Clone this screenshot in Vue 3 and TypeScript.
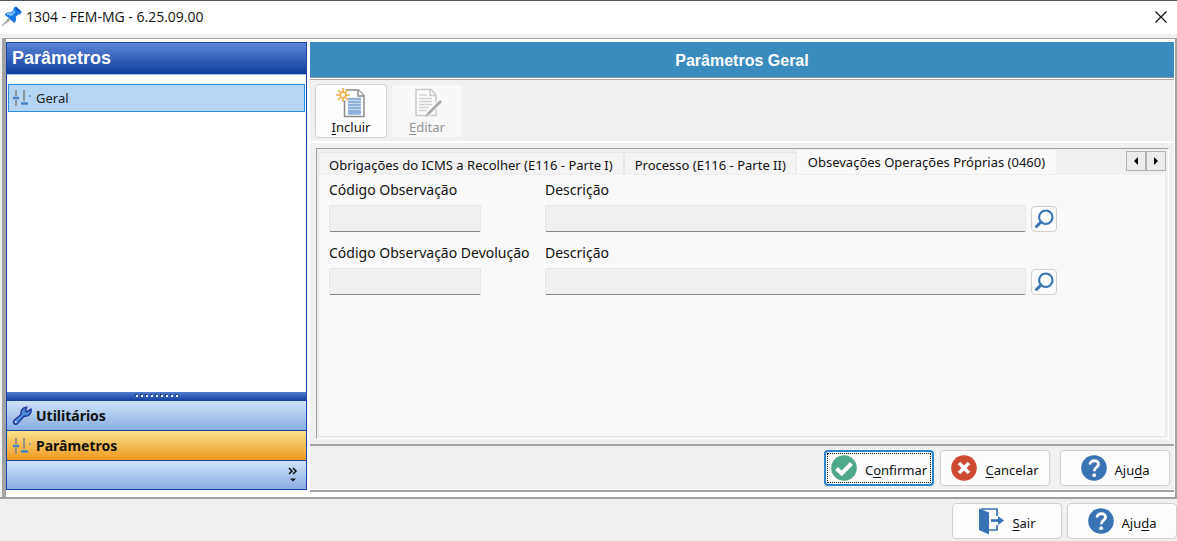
<script setup lang="ts">
import { ref } from 'vue'

interface Tab {
  id: string
  label: string
}

interface FieldRow {
  id: string
  codeLabel: string
  code: string
  description: string
}

const tabs: Tab[] = [
  { id: 'e116-1', label: 'Obrigações do ICMS a Recolher (E116 - Parte I)' },
  { id: 'e116-2', label: 'Processo (E116 - Parte II)' },
  { id: '0460', label: 'Obsevações Operações Próprias (0460)' },
]
const activeTab = ref('0460')

const rows = ref<FieldRow[]>([
  { id: 'obs', codeLabel: 'Código Observação', code: '', description: '' },
  { id: 'dev', codeLabel: 'Código Observação Devolução', code: '', description: '' },
])
</script>

<template>
  <div class="window">
    <header class="titlebar">
      <svg class="pin" viewBox="0 0 20 20" aria-hidden="true">
        <path d="M1 19 7 12l1.500 1.500z" fill="#a9adb3" stroke="#8f949b" stroke-width=".6" />
        <path d="M3.500 8C5 6 7.500 5.500 9.500 6.200L12 3.500C11.500 2 12.800 .6 14.500 .8L19.500 5.500C19.600 7.500 18 8.500 16.500 8L14 10.500C14.800 12.500 14.300 15 12.600 16.300z" fill="#1a78e6" />
        <path d="M14.500 .8 19.500 5.500C18 6.800 12.800 3.800 14.500 .8z" fill="#0b55bd" />
        <path d="M5.500 8c1.500-.8 3.200-.3 4.300.6l3.200-3.600" fill="none" stroke="#7cc4ff" stroke-width="1.800" />
      </svg>
      <h1>1304 - FEM-MG - 6.25.09.00</h1>
      <button class="close" type="button" aria-label="Fechar">
        <svg viewBox="0 0 12 12" width="12" height="12"><path d="M.5.5l11 11M11.500.5l-11 11" stroke="#111" stroke-width="1.200" /></svg>
      </button>
    </header>

    <div class="workspace">
      <aside class="sidebar">
        <h2>Parâmetros</h2>
        <nav class="list">
          <a href="#geral" class="entry">
            <svg class="sliders" viewBox="0 0 20 18" aria-hidden="true">
              <path d="M4 1v6M4 11v6M12 1v11" stroke="#8d959b" stroke-width="2" />
              <path d="M1 9h6M9 14.500h7" stroke="#4785c4" stroke-width="2.400" />
              <path d="M18 6v2" stroke="#4785c4" stroke-width="1.200" />
            </svg>
            Geral
          </a>
        </nav>
        <div class="grip"><i v-for="n in 9" :key="n"></i></div>
        <button class="group" type="button">
          <svg class="wrench" viewBox="0 0 20 20" aria-hidden="true">
            <path d="M2.200 14.300 9 8.500C8.600 5 10 1.500 14.800 1.200L13.500 4.300 14.500 6 19 3.300C19.800 8 16 10.800 12 10.300L5.500 17.500A2.300 2.300 0 1 1 2.200 14.300z" fill="#4b8fd8" stroke="#23399f" stroke-width="1.500" />
            <circle cx="3.800" cy="16.200" r=".9" fill="#dce9fb" />
          </svg>
          Utilitários
        </button>
        <button class="group selected" type="button">
          <svg class="sliders" viewBox="0 0 20 18" aria-hidden="true">
            <path d="M4 1v6M4 11v6M12 1v11" stroke="#99917c" stroke-width="2" />
            <path d="M1 9h6M9 14.500h7" stroke="#4785c4" stroke-width="2.400" />
            <path d="M18 6v2" stroke="#4785c4" stroke-width="1.200" />
          </svg>
          Parâmetros
        </button>
        <div class="overflow">
          <button type="button" aria-label="Configurar botões">
            <svg viewBox="0 0 10 16" width="10" height="16">
              <path d="M1 1l3 3-3 3M5 1l3 3-3 3" fill="none" stroke="#111" stroke-width="1.500" />
              <path d="M2 11.500h6L5 14.500z" fill="#111" />
            </svg>
          </button>
        </div>
      </aside>

      <main class="content">
        <h2 class="banner">Parâmetros Geral</h2>

        <div class="toolbar">
          <button class="tool" type="button">
            <svg viewBox="0 0 30 30" width="30" height="30" aria-hidden="true">
              <path d="M8.500 2h14l5.500 5.500V28.500H8.500z" fill="#fff" stroke="#8c8c8c" stroke-width="1.500" />
              <path d="M22 2v6h6" fill="#fff" stroke="#8c8c8c" stroke-width="1.500" />
              <path d="M12 11h13M12 14h13M12 17h13M12 20h13M12 23h13M12 25.500h13" stroke="#8fb1dc" stroke-width="2.300" />
              <circle cx="7" cy="7" r="6" fill="#fff" />
              <path d="M7 0v14M0 7h14M2 2l10 10M12 2 2 12" stroke="#eead50" stroke-width="1.700" />
              <circle cx="7" cy="7" r="2.800" fill="#fff" stroke="#eead50" stroke-width="1.700" />
            </svg>
            <span><u>I</u>ncluir</span>
          </button>
          <button class="tool" type="button" disabled>
            <svg viewBox="0 0 30 30" width="30" height="30" aria-hidden="true">
              <path d="M4 1.500h15l5 5.500V27.500H4z" fill="#fbfbfb" stroke="#c9c9c9" stroke-width="1.500" />
              <path d="M18 1.500V7.500h6" fill="none" stroke="#c9c9c9" stroke-width="1.500" />
              <path d="M7 7h8M7 10.500h13M7 13.500h13M7 16.500h13M7 19.500h10M7 22.500h8" stroke="#d2d2d2" stroke-width="1.700" />
              <path d="M29 13 15 27" stroke="#fafafa" stroke-width="5" />
              <path d="M29 13 15 27" stroke="#a9a9a9" stroke-width="2.600" />
              <path d="M15.500 25l-2.300 4.200 4-2.500z" fill="#b5b5b5" />
            </svg>
            <span><u>E</u>ditar</span>
          </button>
        </div>

        <section class="body">
          <div class="tabbox">
            <div class="strip">
              <div class="tabs" role="tablist">
                <button
                  v-for="tab in tabs"
                  :key="tab.id"
                  type="button"
                  role="tab"
                  class="tab"
                  :class="{ active: tab.id === activeTab }"
                  :aria-selected="tab.id === activeTab"
                  @click="activeTab = tab.id"
                >{{ tab.label }}</button>
              </div>
              <div class="scroller">
                <button type="button" aria-label="Abas anteriores">
                  <svg viewBox="0 0 8 8" width="8" height="8"><path d="M6 0v8L2 4z" fill="#000" /></svg>
                </button>
                <button type="button" aria-label="Próximas abas">
                  <svg viewBox="0 0 8 8" width="8" height="8"><path d="M2 0v8l4-4z" fill="#000" /></svg>
                </button>
              </div>
            </div>
            <div class="panel" role="tabpanel">
              <div v-for="row in rows" :key="row.id" class="row">
                <label :for="row.id + '-code'">{{ row.codeLabel }}</label>
                <label :for="row.id + '-desc'" class="desc">Descrição</label>
                <input :id="row.id + '-code'" v-model="row.code" type="text" readonly />
                <input :id="row.id + '-desc'" v-model="row.description" type="text" readonly />
                <button class="search" type="button" aria-label="Pesquisar">
                  <svg viewBox="0 0 20 20" width="20" height="20">
                    <circle cx="11.800" cy="8.200" r="6.700" fill="#fff" stroke="#3a74b5" stroke-width="2.200" />
                    <path d="M7 13 2.500 17.500" stroke="#3a74b5" stroke-width="3" stroke-linecap="round" />
                  </svg>
                </button>
              </div>
            </div>
          </div>
        </section>

        <div class="actions">
          <button class="action focused" type="button">
            <svg viewBox="0 0 26 26" width="26" height="26" aria-hidden="true">
              <circle cx="13" cy="13" r="12.800" fill="#4fa887" />
              <path d="M5.500 13.500l5.200 5L20.500 8.500" fill="none" stroke="#fff" stroke-width="4" />
            </svg>
            <span>C<u>o</u>nfirmar</span>
          </button>
          <button class="action" type="button">
            <svg viewBox="0 0 26 26" width="26" height="26" aria-hidden="true">
              <circle cx="13" cy="13" r="12.800" fill="#d04a31" />
              <path d="M8 8l10 10M18 8 8 18" stroke="#fff" stroke-width="3.600" />
            </svg>
            <span><u>C</u>ancelar</span>
          </button>
          <button class="action apart" type="button">
            <svg viewBox="0 0 26 26" width="26" height="26" aria-hidden="true">
              <circle cx="13" cy="13" r="12.800" fill="#3873b3" />
              <path d="M9 9.500C9 4.500 18 4.500 17.500 9.500 17.200 12.300 13.200 12 13.200 16.200" fill="none" stroke="#fff" stroke-width="2.800" />
              <circle cx="13.200" cy="20.200" r="1.900" fill="#fff" />
            </svg>
            <span>Aju<u>d</u>a</span>
          </button>
        </div>
      </main>
    </div>

    <footer class="footer">
      <button class="action" type="button">
        <svg viewBox="0 0 26 28" width="26" height="28" aria-hidden="true">
          <path d="M3 2h16v7M19 18v5h-8" fill="none" stroke="#3873b3" stroke-width="1.700" />
          <path d="M1 1.500 11 5.500V27.500L1 23z" fill="#3873b3" />
          <path d="M13 13.500h8" stroke="#3873b3" stroke-width="2.600" />
          <path d="M20 9l6 4.500-6 4.500z" fill="#3873b3" />
        </svg>
        <span><u>S</u>air</span>
      </button>
      <button class="action" type="button">
        <svg viewBox="0 0 26 26" width="26" height="26" aria-hidden="true">
          <circle cx="13" cy="13" r="12.800" fill="#3873b3" />
          <path d="M9 9.500C9 4.500 18 4.500 17.500 9.500 17.200 12.300 13.200 12 13.200 16.200" fill="none" stroke="#fff" stroke-width="2.800" />
          <circle cx="13.200" cy="20.200" r="1.900" fill="#fff" />
        </svg>
        <span>Aju<u>d</u>a</span>
      </button>
    </footer>
  </div>
</template>

<style>
body {
  margin: 0;
  background: #f0f0f0;
}
</style>

<style scoped>
* {
  box-sizing: border-box;
}

.window {
  min-height: 100vh;
  display: flex;
  flex-direction: column;
  background: #f0f0f0;
  color: #111;
  font: 13px/18px "Noto Sans", "Open Sans", sans-serif;
}

button,
input {
  font: inherit;
  color: inherit;
}

button {
  padding: 0;
  cursor: pointer;
}

svg {
  display: block;
  flex: none;
}

h1,
h2 {
  margin: 0;
}

u {
  text-underline-offset: 2px;
}

.titlebar {
  display: flex;
  align-items: center;
  height: 34px;
  padding: 0 8px 2px 1px;
  border-top: 1px solid #4f5b60;
  background: #fff;
}

.pin {
  width: 21px;
  height: 21px;
}

.titlebar h1 {
  flex: 1;
  margin-left: 4px;
  font: 14px/20px "Open Sans", "Noto Sans", sans-serif;
}

.close {
  display: grid;
  place-items: center;
  width: 16px;
  height: 24px;
  border: 0;
  background: none;
}

.workspace {
  flex: 1;
  display: flex;
  gap: 3px;
  margin-top: 4px;
  margin-left: 2px;
  padding: 3px 1px 0 0;
  border: solid #a3a3a3;
  border-width: 1px 2px 0 4px;
  background: #fff;
}

.sidebar {
  width: 26%;
  max-width: 301px;
  display: flex;
  flex-direction: column;
  margin-bottom: 7px;
  border: 1px solid #1c46a5;
  border-left-width: 1px;
  background: #fff;
}

.sidebar h2 {
  height: 32px;
  padding-left: 5px;
  background: linear-gradient(#5b86d6, #2d5bb4 60%, #0a3d98);
  border-bottom: 1px solid #a9c0ee;
  color: #fff;
  font: bold 18px/31px "Liberation Sans", Arial, sans-serif;
}

.list {
  flex: 1;
  padding: 9px 1px;
}

.entry {
  display: flex;
  align-items: center;
  gap: 4px;
  height: 28px;
  padding-left: 3px;
  border: 1px solid #2b8fe2;
  background: #b4d6f4;
  color: #222;
  text-decoration: none;
}

.sliders,
.wrench {
  width: 20px;
  height: 18px;
}

.wrench {
  height: 20px;
}

.grip {
  display: flex;
  justify-content: center;
  gap: 3px;
  height: 9px;
  padding-top: 3px;
  background: linear-gradient(#4f7ccd, #123f9c);
}

.grip i {
  width: 2px;
  height: 2px;
  background: #e8f0ff;
  box-shadow: -1px -1px #263f66;
}

.group {
  display: flex;
  align-items: center;
  gap: 4px;
  height: 30px;
  padding-left: 5px;
  border: 0;
  border-bottom: 1px solid #1c46a5;
  background: linear-gradient(#cfe1fa, #89aee3);
  font-size: 14px;
  font-weight: bold;
}

.group.selected {
  background: linear-gradient(#fbdf8c, #ee9a1e);
}

.overflow {
  display: flex;
  justify-content: flex-end;
  height: 28px;
  padding: 4px 8px;
  background: linear-gradient(#cfe1fa, #89aee3);
}

.overflow button {
  border: 0;
  background: none;
}

.content {
  flex: 1;
  min-width: 0;
  display: flex;
  flex-direction: column;
  margin-bottom: 5px;
  border-bottom: 2px solid #a3a3a3;
}

.banner {
  height: 36px;
  margin-bottom: 1px;
  border-bottom: 1px solid #8a9aa3;
  background: #3a8cbf;
  color: #fff;
  font: bold 16px/37px "Liberation Sans", Arial, sans-serif;
  text-align: center;
}

.toolbar {
  display: flex;
  gap: 4px;
  height: 63px;
  padding: 4px 5px;
  border-top: 1px solid #ababab;
  border-bottom: 1px solid #fff;
  background: #f0f0f0;
}

.tool {
  width: 72px;
  height: 54px;
  display: flex;
  flex-direction: column;
  align-items: center;
  justify-content: space-between;
  padding: 3px 0 2px;
  border: 1px solid #d2d2d2;
  border-radius: 4px;
  background: #fdfdfd;
}

.tool:disabled {
  border-color: #f1f1f1;
  background: #f8f8f8;
  color: #949494;
}

.body {
  flex: 1;
  display: flex;
  padding: 5px 5px 5px 6px;
  border-top: 1px solid #fff;
  border-bottom: 2px solid #a3a3a3;
  background: #f0f0f0;
}

.tabbox {
  flex: 1;
  min-width: 0;
  display: flex;
  flex-direction: column;
  padding: 1px 2px 1px 1px;
  border: 1px solid #fff;
  border-top-color: #a0a0a0;
  border-left-color: #a0a0a0;
}

.strip {
  display: flex;
  justify-content: space-between;
  height: 24px;
}

.tabs {
  display: flex;
  align-items: flex-end;
}

.tab {
  height: 22px;
  padding: 2px 10px 0;
  border: 1px solid #e6e6e6;
  border-bottom: 0;
  background: #f3f3f3;
  line-height: 18px;
  white-space: nowrap;
}

.tab.active {
  height: 24px;
  padding: 0 10px 2px;
  border-color: #f9f9f9;
  background: #f9f9f9;
}

.scroller {
  display: flex;
  padding: 1px 0 3px;
}

.scroller button {
  display: grid;
  place-items: center;
  width: 20px;
  height: 20px;
  border: 1px solid #b2b2b2;
  background: #ececec;
}

.panel {
  flex: 1;
  display: flex;
  flex-direction: column;
  gap: 11px;
  padding: 5px 108px 5px 10px;
  border: 1px solid #e6e6e6;
  border-top-color: #f0f0f0;
  background: #f9f9f9;
}

.row {
  display: grid;
  grid-template-columns: 152px minmax(0, 1fr) 26px;
  column-gap: 5px;
  row-gap: 5px;
  align-items: center;
}

.row label {
  font-size: 14px;
  line-height: 20px;
  white-space: nowrap;
}

.row label.desc,
.row input:nth-of-type(2) {
  margin-left: 59px;
}

.row label.desc {
  grid-column: 2 / 4;
}

.row input {
  min-width: 0;
  height: 27px;
  padding: 0 4px;
  border: 1px solid #e6e6e6;
  border-bottom-color: #868686;
  border-radius: 2px;
  background: #f0f0f0;
}

.search {
  display: grid;
  place-items: center;
  width: 26px;
  height: 26px;
  border: 1px solid #d0d0d0;
  border-radius: 4px;
  background: #fdfdfd;
}

.actions,
.footer {
  display: flex;
  justify-content: flex-end;
}

.actions {
  gap: 6px;
  height: 44px;
  padding: 4px 4px 0;
  background: #f0f0f0;
  border-bottom: 1px solid #fff;
}

.action {
  display: flex;
  align-items: center;
  justify-content: center;
  gap: 8px;
  width: 110px;
  height: 36px;
  border: 1px solid #d0d0d0;
  border-radius: 4px;
  background: #fdfdfd;
}

.action span {
  padding-top: 3px;
}

.action.apart {
  margin-left: 4px;
}

.action.focused {
  border: 2px solid #2b82cf;
  outline: 1px dotted #111;
  outline-offset: -4px;
}

.footer {
  gap: 5px;
  height: 44px;
  padding-top: 4px;
  border-top: 2px solid #a0a0a0;
}
</style>
